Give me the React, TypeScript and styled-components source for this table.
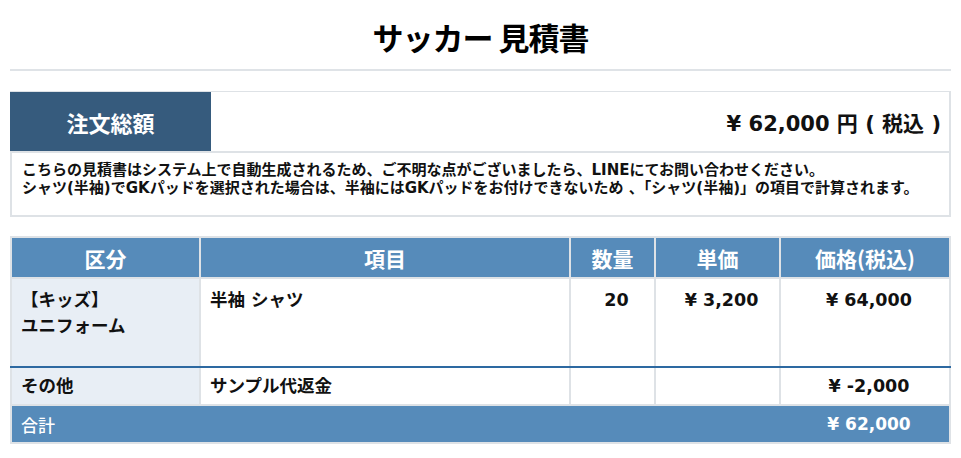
import React from 'react';
import styled, { createGlobalStyle } from 'styled-components';

const GlobalStyle = createGlobalStyle`
  body {
    margin: 0;
    background: #ffffff;
    color: #111111;
    font-family: 'DejaVu Sans', 'Noto Sans CJK JP', sans-serif;
  }
`;

type Row = {
  category: string[];
  item: string;
  qty: string;
  unit: string;
  price: string;
  tall?: boolean;
};

const rows: Row[] = [
  {
    category: ['【キッズ】', 'ユニフォーム'],
    item: '半袖 シャツ',
    qty: '20',
    unit: '¥ 3,200',
    price: '¥ 64,000',
    tall: true,
  },
  { category: ['その他'], item: 'サンプル代返金', qty: '', unit: '', price: '¥ -2,000' },
];

const App = () => {
  return (
    <Page>
      <GlobalStyle />
      <Title>サッカー 見積書</Title>
      <Rule />

      <Summary>
        <SummaryTop>
          <SummaryLabel>注文総額</SummaryLabel>
          <SummaryAmount>¥ 62,000 円 ( 税込 )</SummaryAmount>
        </SummaryTop>
        <Notes>
          こちらの見積書はシステム上で自動生成されるため、ご不明な点がございましたら、LINEにてお問い合わせください。
          <br />
          シャツ(半袖)でGKパッドを選択された場合は、半袖にはGKパッドをお付けできないため 、「シャツ(半袖)」の項目で計算されます。
        </Notes>
      </Summary>

      <Table>
        <colgroup>
          <col style={{ width: 189 }} />
          <col style={{ width: 370 }} />
          <col style={{ width: 85 }} />
          <col style={{ width: 125 }} />
          <col style={{ width: 170 }} />
        </colgroup>
        <thead>
          <tr>
            <Th>区分</Th>
            <Th>項目</Th>
            <Th>数量</Th>
            <Th>単価</Th>
            <Th>価格(税込)</Th>
          </tr>
        </thead>
        <tbody>
          {rows.map((r, i) => (
            <BodyRow key={i} $tall={r.tall} $divider={i === 0}>
              <CategoryCell $top={r.tall}>
                {r.category.map((c, j) => (
                  <div key={j}>{c}</div>
                ))}
              </CategoryCell>
              <Td $top={r.tall}>{r.item}</Td>
              <Td $top={r.tall} $center>{r.qty}</Td>
              <Td $top={r.tall} $center>{r.unit}</Td>
              <Td $top={r.tall} $center>{r.price}</Td>
            </BodyRow>
          ))}
          <TotalRow>
            <TotalLabel colSpan={4}>合計</TotalLabel>
            <TotalValue>¥ 62,000</TotalValue>
          </TotalRow>
        </tbody>
      </Table>
    </Page>
  );
};

export default App;

const Page = styled.div`
  padding: 0 10px;
`;

const Title = styled.h1`
  margin: 0;
  padding-top: 15px;
  height: 54px;
  line-height: 44px;
  text-align: center;
  font-family: 'Noto Sans CJK JP', sans-serif;
  font-size: 31px;
  font-weight: 700;
  letter-spacing: -1px;
  color: #000000;
`;

const Rule = styled.hr`
  margin: 0 0 20px;
  border: 0;
  height: 2px;
  background: #dfe3e7;
`;

const Summary = styled.section`
  border: 2px solid #dee2e6;
  border-top-width: 1px;
`;

const SummaryTop = styled.div`
  display: flex;
  height: 59px;
  border-bottom: 2px solid #dee2e6;
`;

const SummaryLabel = styled.div`
  width: 201px;
  margin-left: -2px;
  background: #365b7d;
  color: #ffffff;
  font-family: 'Noto Sans CJK JP', sans-serif;
  font-size: 22px;
  font-weight: 700;
  display: flex;
  align-items: center;
  justify-content: center;
`;

const SummaryAmount = styled.div`
  flex: 1;
  display: flex;
  align-items: center;
  justify-content: flex-end;
  padding-right: 8px;
  font-size: 21px;
  font-weight: 700;
`;

const Notes = styled.p`
  margin: 0;
  min-height: 62px;
  box-sizing: border-box;
  padding: 8px 10px 0;
  font-size: 15px;
  line-height: 18px;
  font-weight: 700;
  white-space: nowrap;
`;

const Table = styled.table`
  margin-top: 19px;
  width: 100%;
  table-layout: fixed;
  border-collapse: collapse;
  border: 2px solid #dee2e6;
`;

const Th = styled.th`
  height: 39px;
  padding: 0;
  background: #568bba;
  color: #ffffff;
  font-family: 'Noto Sans CJK JP', sans-serif;
  font-size: 21px;
  font-weight: 700;
  text-align: center;
  border: 2px solid #dee2e6;
`;

const BodyRow = styled.tr<{ $tall?: boolean; $divider?: boolean }>`
  height: ${(p) => (p.$tall ? '89px' : '38px')};

  td {
    border-bottom: 2px solid ${(p) => (p.$divider ? '#2d69a1' : '#dee2e6')};
  }
`;

const Td = styled.td<{ $center?: boolean; $top?: boolean }>`
  padding: ${(p) => (p.$top ? '8px' : '0')} ${(p) => (p.$center ? '1px 0 9px' : '9px 0')};
  vertical-align: ${(p) => (p.$top ? 'top' : 'middle')};
  text-align: ${(p) => (p.$center ? 'center' : 'left')};
  font-size: 17.5px;
  font-weight: 700;
  line-height: 26px;
  border-left: 2px solid #dee2e6;
  border-right: 2px solid #dee2e6;
  background: #ffffff;
`;

const CategoryCell = styled(Td)`
  background: #e8eef5;
`;

const TotalRow = styled.tr`
  height: 38px;
  background: #568bba;
  color: #ffffff;
`;

const TotalLabel = styled.td`
  padding: 0 9px;
  font-family: 'Noto Sans CJK JP', sans-serif;
  font-size: 17px;
  font-weight: 500;
`;

const TotalValue = styled.td`
  padding: 0 0 0 9px;
  text-align: center;
  font-size: 17px;
  font-weight: 700;
`;
